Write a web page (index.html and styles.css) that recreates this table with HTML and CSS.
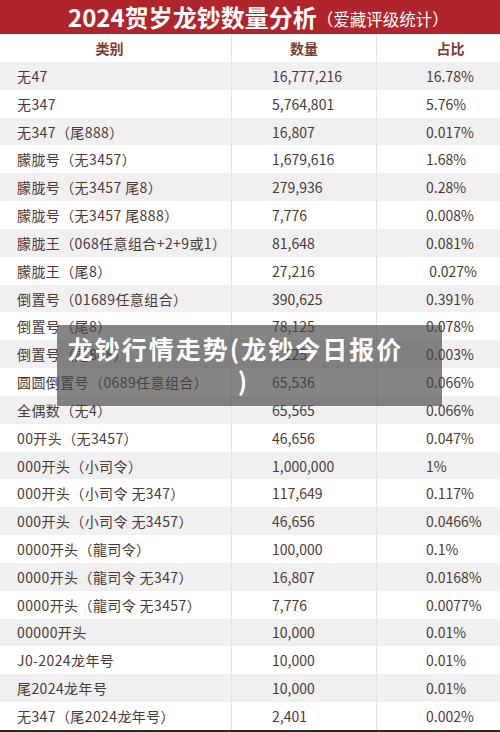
FILE: index.html
```html
<!DOCTYPE html>
<html lang="zh-CN">
<head>
    <meta charset="UTF-8">
    <meta name="viewport" content="width=device-width, initial-scale=1.0">
    <title>2024贺岁龙钞数量分析</title>
    <link rel="stylesheet" href="styles.css">
</head>
<body>

<div class="sheet">
    <div class="title-bar">
        <span class="title-main">2024贺岁龙钞数量分析</span><span class="title-sub">（爱藏评级统计）</span>
    </div>

    <div class="row head">
        <div class="cell c1">类别</div>
        <div class="cell c2">数量</div>
        <div class="cell c3">占比</div>
    </div>

    <div id="rows"></div>

    <!-- caption box over the table -->
    <div class="caption">
        <div class="caption-line">龙钞行情走势(龙钞今日报价</div>
        <div class="caption-line tail">)</div>
    </div>
</div>

<script>
    document.addEventListener('DOMContentLoaded', () => {
        const data = [
            ['无47', '16,777,216', '16.78%'],
            ['无347', '5,764,801', '5.76%'],
            ['无347（尾888）', '16,807', '0.017%'],
            ['朦胧号（无3457）', '1,679,616', '1.68%'],
            ['朦胧号（无3457 尾8）', '279,936', '0.28%'],
            ['朦胧号（无3457 尾888）', '7,776', '0.008%'],
            ['朦胧王（068任意组合+2+9或1）', '81,648', '0.081%'],
            ['朦胧王（尾8）', '27,216', '\u00a00.027%'],
            ['倒置号（01689任意组合）', '390,625', '0.391%'],
            ['倒置号（尾8）', '78,125', '0.078%'],
            ['倒置号（尾888）', '3,125', '0.003%'],
            ['圆圆倒置号（0689任意组合）', '65,536', '0.066%'],
            ['全偶数（无4）', '65,565', '0.066%'],
            ['00开头（无3457）', '46,656', '0.047%'],
            ['000开头（小司令）', '1,000,000', '1%'],
            ['000开头（小司令 无347）', '117,649', '0.117%'],
            ['000开头（小司令 无3457）', '46,656', '0.0466%'],
            ['0000开头（龍司令）', '100,000', '0.1%'],
            ['0000开头（龍司令 无347）', '16,807', '0.0168%'],
            ['0000开头（龍司令 无3457）', '7,776', '0.0077%'],
            ['00000开头', '10,000', '0.01%'],
            ['J0-2024龙年号', '10,000', '0.01%'],
            ['尾2024龙年号', '10,000', '0.01%'],
            ['无347（尾2024龙年号）', '2,401', '0.002%']
        ];

        const rows = document.getElementById('rows');
        data.forEach((r, i) => {
            const row = document.createElement('div');
            row.className = 'row' + (i % 2 === 0 ? ' shade' : '');
            row.innerHTML = `
                <div class="cell c1">${r[0]}</div>
                <div class="cell c2">${r[1]}</div>
                <div class="cell c3">${r[2]}</div>
            `;
            rows.appendChild(row);
        });
    });
</script>

</body>
</html>
```

FILE: styles.css
```css
body {
    margin: 0;
    background-color: #fff;
    font-family: "Noto Sans CJK SC", "Noto Sans", sans-serif;
    color: #4b3a34;
}
.sheet {
    position: relative;
    width: 500px;
    height: 732px;
    overflow: hidden;
    border-bottom: 2px solid #2e2a28;
    box-sizing: border-box;
}
.title-bar {
    height: 34px;
    background-color: #b0252b;
    color: #fff;
    display: flex;
    align-items: center;
    padding-left: 68px;
    box-sizing: border-box;
}
.title-main {
    font-size: 24px;
    font-weight: 700;
    line-height: 34px;
}
.title-sub {
    font-size: 16.5px;
    line-height: 34px;
    margin-top: 3px;
}
.row {
    display: grid;
    grid-template-columns: 232px 145px 123px;
    height: 27.83px;
    align-items: stretch;
}
.row.shade {
    background-color: #f0f0f0;
}
.cell {
    display: flex;
    align-items: center;
    font-size: 14px;
    white-space: nowrap;
}
.c1 {
    padding-left: 17px;
    letter-spacing: 0.4px;
    border-right: 1px solid #e4e4e4;
}
.c2 {
    padding-left: 40px;
    border-right: 1px solid #e4e4e4;
}
.c3 {
    padding-left: 49px;
}
.row.head {
    height: 28px;
    background-color: #fff;
}
.row.head .cell {
    justify-content: center;
    padding-left: 0;
    font-weight: 700;
    letter-spacing: 0;
    color: #7c3a2e;
}
.row.head .c1 {
    padding-right: 12px;
}
.row.head .c3 {
    padding-left: 24px;
}
/* caption box */
.caption {
    position: absolute;
    left: 57px;
    top: 325px;
    width: 385px;
    height: 81px;
    background-color: rgba(70, 70, 70, 0.66);
    color: #fff;
    text-align: center;
    padding: 7px 28px 0 0;
    box-sizing: border-box;
}
.caption-line {
    font-size: 25px;
    font-weight: 700;
    letter-spacing: 2px;
    line-height: 32px;
}
.caption-line.tail {
    padding-left: 16px;
}
```
